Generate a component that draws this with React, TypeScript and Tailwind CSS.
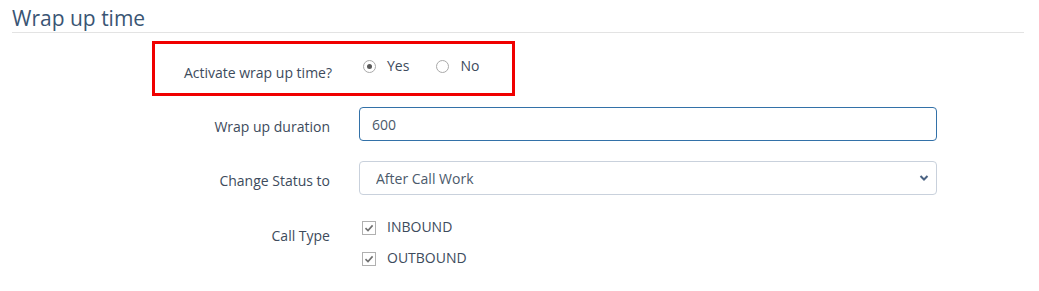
import React, { useState } from "react";

const labelCls = "w-[330px] shrink-0 text-right text-[14px] leading-[20px] text-[#3d4b5c]";

const Radio = ({ checked, label, onClick }: { checked: boolean; label: string; onClick: () => void }) => (
  <button type="button" onClick={onClick} className="flex items-center gap-[11px] text-[14px] leading-[20px] text-[#3d4b5c]">
    <span className="w-[13px] h-[13px] rounded-full border border-[#a9a9a9] bg-white flex items-center justify-center">
      {checked && <span className="w-[5px] h-[5px] rounded-full bg-[#5a5a5a]" />}
    </span>
    {label}
  </button>
);

const Check = ({ checked, label, onClick }: { checked: boolean; label: string; onClick: () => void }) => (
  <button type="button" onClick={onClick} className="flex items-start gap-[11px] text-[14px] leading-[20px] text-[#3d4b5c] h-[20px]">
    <span className="mt-[4px] w-[14px] h-[14px] border border-[#b0b0b0] bg-white flex items-center justify-center">
      {checked && (
        <svg width="10" height="10" viewBox="0 0 10 10">
          <path d="M1.5 5.2 L4 7.6 L8.6 2.4" fill="none" stroke="#707070" strokeWidth="1.6" />
        </svg>
      )}
    </span>
    {label}
  </button>
);

export default function App() {
  const [active, setActive] = useState(true);
  const [duration, setDuration] = useState("600");
  const [status, setStatus] = useState("After Call Work");
  const [inbound, setInbound] = useState(true);
  const [outbound, setOutbound] = useState(true);

  return (
    <div className="w-full bg-white font-['Open_Sans',sans-serif]">
      <div className="ml-[12px] mr-[15px] pt-[4px] border-b border-[#e3e3e3] text-[21px] leading-[28px] text-[#3a5574]">
        Wrap up time
      </div>

      {/* activate row, highlighted */}
      <div className="relative mt-[11px] h-[49px] flex">
        <div className="absolute left-[152px] top-[-3px] w-[363px] h-[55px] border-[3px] border-[#f00000] pointer-events-none" />
        <div className={`${labelCls} pt-[19px] !w-[332px]`}>Activate wrap up time?</div>
        <div className="ml-[31px] pt-[12px] flex items-start gap-[27px]">
          <Radio checked={active} label="Yes" onClick={() => setActive(true)} />
          <Radio checked={!active} label="No" onClick={() => setActive(false)} />
        </div>
      </div>

      <div className="mt-[14px] flex">
        <div className={`${labelCls} pt-[10px]`}>Wrap up duration</div>
        <input
          value={duration}
          onChange={(e) => setDuration(e.target.value)}
          className="ml-[29px] w-[578px] h-[34px] rounded-[4px] border border-[#3371a8] pl-[12px] text-[14px] text-[#4b5a6b] outline-none"
        />
      </div>

      <div className="mt-[20px] flex">
        <div className={`${labelCls} pt-[10px]`}>Change Status to</div>
        <div className="relative ml-[29px] w-[578px] h-[34px]">
          <select
            value={status}
            onChange={(e) => setStatus(e.target.value)}
            className="appearance-none w-full h-full rounded-[4px] border border-[#c9d1dc] bg-white pl-[16px] text-[14px] text-[#4b5a6b] outline-none"
          >
            <option>After Call Work</option>
            <option>Available</option>
            <option>Break</option>
          </select>
          <svg className="absolute right-[8px] top-[13px] pointer-events-none" width="10" height="8" viewBox="0 0 10 8">
            <path d="M1.5 2 L5 5.5 L8.5 2" fill="none" stroke="#4a6282" strokeWidth="2" />
          </svg>
        </div>
      </div>

      <div className="mt-[22px] flex pb-[24px]">
        <div className={`${labelCls} pt-[9px]`}>Call Type</div>
        <div className="ml-[32px] flex flex-col gap-[11px]">
          <Check checked={inbound} label="INBOUND" onClick={() => setInbound(!inbound)} />
          <Check checked={outbound} label="OUTBOUND" onClick={() => setOutbound(!outbound)} />
        </div>
      </div>
    </div>
  );
}
